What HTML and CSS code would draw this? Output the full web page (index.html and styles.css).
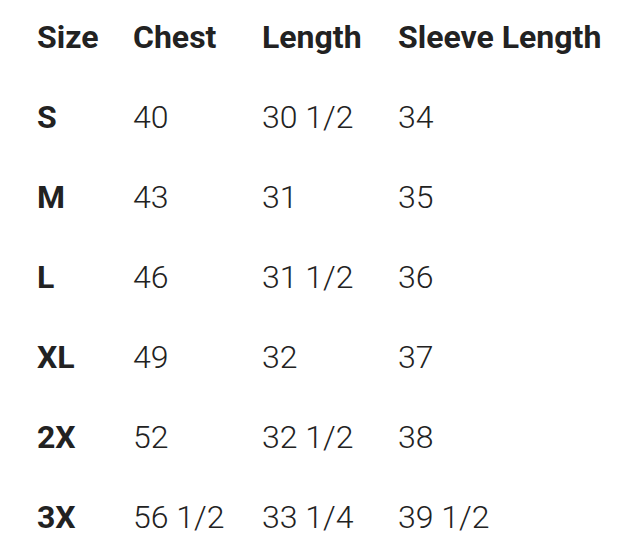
FILE: index.html
```html
<!DOCTYPE html>
<html>
<head>
<meta charset="utf-8">
<link rel="stylesheet" href="styles.css">
</head>
<body>
<div class="chart">
  <div class="cell head">Size</div><div class="cell head">Chest</div><div class="cell head">Length</div><div class="cell head">Sleeve Length</div>
  <div class="cell size">S</div><div class="cell">40</div><div class="cell">30 1/2</div><div class="cell">34</div>
  <div class="cell size">M</div><div class="cell">43</div><div class="cell">31</div><div class="cell">35</div>
  <div class="cell size">L</div><div class="cell">46</div><div class="cell">31 1/2</div><div class="cell">36</div>
  <div class="cell size">XL</div><div class="cell">49</div><div class="cell">32</div><div class="cell">37</div>
  <div class="cell size">2X</div><div class="cell">52</div><div class="cell">32 1/2</div><div class="cell">38</div>
  <div class="cell size">3X</div><div class="cell">56 1/2</div><div class="cell">33 1/4</div><div class="cell">39 1/2</div>
</div>
</body>
</html>
```
FILE: styles.css
```css
html, body {
  margin: 0;
  padding: 0;
  background: #fff;
}
.chart {
  display: grid;
  grid-template-columns: 96px 129px 136px auto;
  row-gap: 46px;
  padding: 20px 0 0 37px;
  font-family: Roboto, "Liberation Sans", sans-serif;
  font-size: 32px;
  line-height: 34px;
  color: #222;
}
.cell {
  font-weight: 300;
  white-space: nowrap;
}
.head, .size {
  font-weight: 700;
}
```
